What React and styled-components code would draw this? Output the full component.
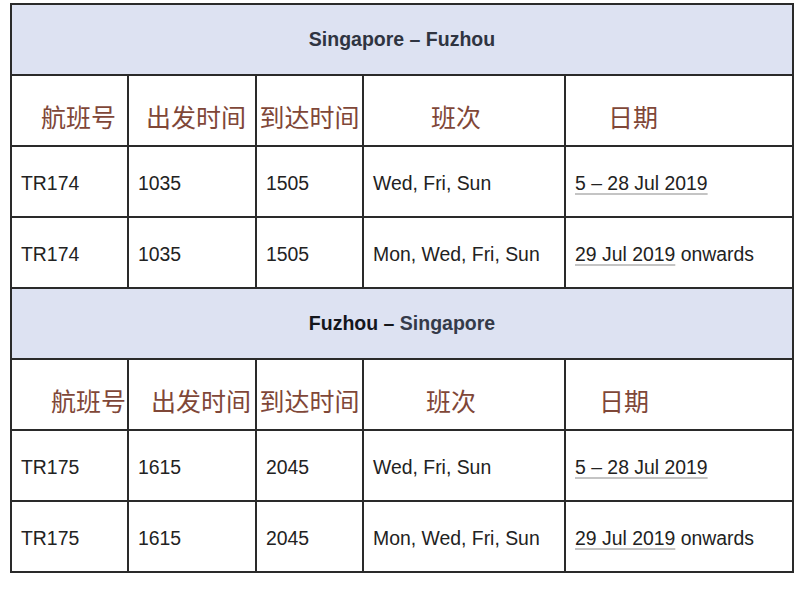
import React from 'react';
import styled, { createGlobalStyle } from 'styled-components';

const GlobalStyle = createGlobalStyle`
  html, body {
    margin: 0;
    padding: 0;
    background: #ffffff;
  }
  body {
    font-family: "Liberation Sans", Arial, sans-serif;
  }
`;

const sections = [
  {
    title: [
      { text: 'Singapore – Fuzhou', tone: '#2f3441' },
    ],
    headPads: [29, 17, 0, 67, 42],
    rows: [
      ['TR174', '1035', '1505', 'Wed, Fri, Sun', ['5 – 28 Jul 2019', '']],
      ['TR174', '1035', '1505', 'Mon, Wed, Fri, Sun', ['29 Jul 2019', ' onwards']],
    ],
  },
  {
    title: [
      { text: 'Fuzhou – ', tone: '#14161c' },
      { text: 'Singapore', tone: '#343a49' },
    ],
    headPads: [39, 22, 0, 62, 33],
    rows: [
      ['TR175', '1615', '2045', 'Wed, Fri, Sun', ['5 – 28 Jul 2019', '']],
      ['TR175', '1615', '2045', 'Mon, Wed, Fri, Sun', ['29 Jul 2019', ' onwards']],
    ],
  },
];

const headings = ['航班号', '出发时间', '到达时间', '班次', '日期'];

function App() {
  return (
    <>
      <GlobalStyle />
      <Page>
        <Table>
          {sections.map((section, s) => (
            <React.Fragment key={s}>
              <TitleCell>
                {section.title.map((part, i) => (
                  <TitlePart key={i} $tone={part.tone}>{part.text}</TitlePart>
                ))}
              </TitleCell>
              {headings.map((h, i) => (
                <HeadCell key={h} $pad={section.headPads[i]} $center={i === 2}>
                  {h}
                </HeadCell>
              ))}
              {section.rows.map((row, r) => (
                <React.Fragment key={r}>
                  {row.slice(0, 4).map((value, c) => (
                    <Cell key={c}>{value}</Cell>
                  ))}
                  <Cell>
                    <DateLink>{row[4][0]}</DateLink>
                    {row[4][1]}
                  </Cell>
                </React.Fragment>
              ))}
            </React.Fragment>
          ))}
        </Table>
      </Page>
    </>
  );
}

const Page = styled.div`
  padding: 3px 0 0 10px;
  width: 800px;
  height: 593px;
  box-sizing: border-box;
`;

const Table = styled.div`
  display: grid;
  grid-template-columns: 117px 128px 107px 202px 228px;
  grid-auto-rows: 71px;
  width: 784px;
  box-sizing: border-box;
  border-left: 2px solid #2a2a2a;
  border-top: 2px solid #2a2a2a;
`;

const BaseCell = styled.div`
  box-sizing: border-box;
  border-right: 2px solid #2a2a2a;
  border-bottom: 2px solid #2a2a2a;
  display: flex;
  align-items: center;
`;

const TitleCell = styled(BaseCell)`
  grid-column: 1 / -1;
  justify-content: center;
  background: #dde2f2;
  font-weight: bold;
  font-size: 19.5px;
`;

const TitlePart = styled.span`
  color: ${props => props.$tone};
  white-space: pre;
`;

const HeadCell = styled(BaseCell)`
  justify-content: ${props => (props.$center ? 'center' : 'flex-start')};
  padding-left: ${props => props.$pad}px;
  padding-top: 10px;
  font-family: "Noto Sans CJK SC", "Noto Sans", sans-serif;
  font-size: 25px;
  color: #7f4738;
  white-space: nowrap;
`;

const Cell = styled(BaseCell)`
  padding-left: 9px;
  padding-top: 3px;
  font-size: 19.4px;
  color: #222222;
  white-space: pre;
`;

const DateLink = styled.span`
  text-decoration: underline;
  text-decoration-color: #c4c4c4;
  text-decoration-thickness: 2px;
  text-underline-offset: 3px;
`;

export default App;
